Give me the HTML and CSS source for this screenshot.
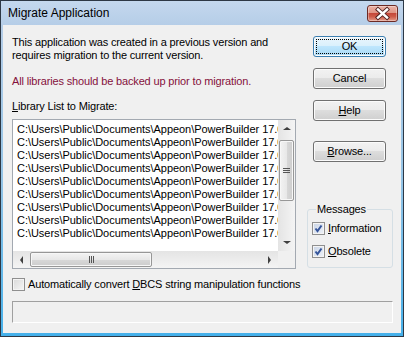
FILE: index.html
```html
<!DOCTYPE html>
<html lang="en">
<head>
    <meta charset="UTF-8">
    <title>Migrate Application</title>
    <link rel="stylesheet" href="styles.css">
</head>
<body>

    <div class="window">
        <div class="titlebar">
            <span class="title">Migrate Application</span>
            <span class="close">
                <svg width="31" height="17" viewBox="0 0 31 17">
                    <path d="M11 4.5 L20 12.5 M20 4.5 L11 12.5" stroke="#4a1f1f" stroke-width="4.2" stroke-linecap="square"/>
                    <path d="M11 4.5 L20 12.5 M20 4.5 L11 12.5" stroke="#ffffff" stroke-width="2.4" stroke-linecap="square"/>
                </svg>
            </span>
        </div>

        <div class="client">
            <div class="top">
                <div class="left">
                    <p class="intro">This application was created in a previous version and<br>requires migration to the current version.</p>
                    <p class="warn">All libraries should be backed up prior to migration.</p>
                    <div class="label"><u>L</u>ibrary List to Migrate:</div>

                    <div class="listbox">
                        <div class="items">
                            <div>C:\Users\Public\Documents\Appeon\PowerBuilder 17.0\Code Examples\Example App\pbexamfe.pbl</div>
                            <div>C:\Users\Public\Documents\Appeon\PowerBuilder 17.0\Code Examples\Example App\pbexamw1.pbl</div>
                            <div>C:\Users\Public\Documents\Appeon\PowerBuilder 17.0\Code Examples\Example App\pbexamw2.pbl</div>
                            <div>C:\Users\Public\Documents\Appeon\PowerBuilder 17.0\Code Examples\Example App\pbexamw3.pbl</div>
                            <div>C:\Users\Public\Documents\Appeon\PowerBuilder 17.0\Code Examples\Example App\pbexamw4.pbl</div>
                            <div>C:\Users\Public\Documents\Appeon\PowerBuilder 17.0\Code Examples\Example App\pbexamuo.pbl</div>
                            <div>C:\Users\Public\Documents\Appeon\PowerBuilder 17.0\Code Examples\Example App\pbexamd1.pbl</div>
                            <div>C:\Users\Public\Documents\Appeon\PowerBuilder 17.0\Code Examples\Example App\pbexamd2.pbl</div>
                            <div>C:\Users\Public\Documents\Appeon\PowerBuilder 17.0\Code Examples\Example App\pbexamm.pbl</div>
                        </div>
                        <div class="vscroll">
                            <div class="arrow"><span class="tri-up"></span></div>
                            <div class="track">
                                <div class="thumb"><span class="grip"></span></div>
                            </div>
                            <div class="arrow"><span class="tri-down"></span></div>
                        </div>
                        <div class="hscroll">
                            <div class="arrow"><span class="tri-left"></span></div>
                            <div class="track">
                                <div class="thumb"><span class="grip"></span></div>
                            </div>
                            <div class="arrow"><span class="tri-right"></span></div>
                        </div>
                        <div class="corner"></div>
                    </div>
                </div>

                <div class="right">
                    <div class="button default"><span class="focus">OK</span></div>
                    <div class="button">Cancel</div>
                    <div class="button"><u>H</u>elp</div>
                    <div class="button browse"><u>B</u>rowse...</div>

                    <fieldset class="group">
                        <legend>Messages</legend>
                        <div class="check-row">
                            <span class="checkbox checked">
                                <svg width="9" height="9" viewBox="0 0 9 9"><path d="M1.5 4.5 L3.5 7 L7.5 1.5" fill="none" stroke="#34549a" stroke-width="2"/></svg>
                            </span>
                            <span><u>I</u>nformation</span>
                        </div>
                        <div class="check-row">
                            <span class="checkbox checked">
                                <svg width="9" height="9" viewBox="0 0 9 9"><path d="M1.5 4.5 L3.5 7 L7.5 1.5" fill="none" stroke="#34549a" stroke-width="2"/></svg>
                            </span>
                            <span><u>O</u>bsolete</span>
                        </div>
                    </fieldset>
                </div>
            </div>

            <div class="check-row convert">
                <span class="checkbox"></span>
                <span>Automatically convert <u>D</u>BCS string manipulation functions</span>
            </div>

            <div class="status"></div>
        </div>
    </div>

</body>
</html>
```

FILE: styles.css
```css
* {
    box-sizing: border-box;
}
body {
    margin: 0;
    padding: 0;
    font-family: 'Liberation Sans', Arial, sans-serif;
    font-size: 11px;
    letter-spacing: -0.15px;
    color: #000;
    background: #ffffff;
}
u {
    text-decoration: underline;
}
.window {
    width: 404px;
    height: 337px;
    border: 1px solid #2d3845;
    background: linear-gradient(to bottom, #c4d8ee 0, #b5cde7 25px, #94c4e6 180px, #45b0ea 100%);
    display: flex;
    flex-direction: column;
}
.titlebar {
    height: 24px;
    display: flex;
    align-items: flex-start;
    justify-content: space-between;
    padding-left: 7px;
}
.title {
    font-size: 12px;
    letter-spacing: 0;
    line-height: 13px;
    margin-top: 6px;
    color: #000;
}
.close {
    width: 31px;
    height: 17px;
    margin-top: 4px;
    margin-right: 5px;
    border: 1px solid #6c2a24;
    border-radius: 3px;
    background: linear-gradient(to bottom, #eab2a6 0%, #df9585 45%, #c5483a 50%, #cd5a48 70%, #e39a88 100%);
    box-shadow: inset 0 0 0 1px rgba(255, 255, 255, 0.35);
    display: flex;
}
.close svg {
    margin: -1px;
}
.client {
    flex: 1;
    margin: 0 2px 3px 2px;
    background-color: #f0f0f0;
    padding: 11px 0 0 9px;
    display: flex;
    flex-direction: column;
}
.top {
    display: flex;
}
.left {
    width: 284px;
}
p {
    margin: 0;
    line-height: 13px;
}
.warn {
    margin-top: 13px;
    color: #85103c;
}
.label {
    margin-top: 12px;
    line-height: 13px;
}
.listbox {
    margin-top: 6px;
    height: 150px;
    border: 1px solid #a3a9b1;
    background: #ffffff;
    display: grid;
    grid-template-columns: 1fr 17px;
    grid-template-rows: 1fr 17px;
}
.items {
    overflow: hidden;
    padding: 3px 0 0 4px;
    white-space: nowrap;
    line-height: 13px;
    letter-spacing: -0.04px;
}
.vscroll, .hscroll {
    display: flex;
    background: #eaeaea;
}
.vscroll {
    flex-direction: column;
    background: linear-gradient(to right, #e4e4e4, #f4f4f4);
}
.hscroll {
    background: linear-gradient(to bottom, #e4e4e4, #f4f4f4);
}
.arrow {
    width: 17px;
    height: 17px;
    display: flex;
    align-items: center;
    justify-content: center;
    flex: none;
}
.track {
    flex: 1;
    display: flex;
}
.vscroll .track {
    flex-direction: column;
    padding-top: 3px;
}
.vscroll .thumb {
    height: 61px;
    margin: 0 1px;
}
.hscroll .thumb {
    width: 122px;
    margin: 1px 0;
}
.thumb {
    border: 1px solid #979797;
    border-radius: 2px;
    background: linear-gradient(to right, #f3f3f3, #e8e8e8 50%, #d8d8d8 51%, #cdcdcd);
    box-shadow: inset 0 0 0 1px #f7f7f7;
    display: flex;
    align-items: center;
    justify-content: center;
}
.hscroll .thumb {
    background: linear-gradient(to bottom, #f3f3f3, #e8e8e8 50%, #d8d8d8 51%, #cdcdcd);
}
.vscroll .grip {
    width: 7px;
    height: 5px;
    border-top: 1px solid #555;
    border-bottom: 1px solid #555;
    background: linear-gradient(to bottom, transparent 1px, #555 1px, #555 2px, transparent 2px);
}
.hscroll .grip {
    width: 5px;
    height: 7px;
    border-left: 1px solid #555;
    border-right: 1px solid #555;
    background: linear-gradient(to right, transparent 1px, #555 1px, #555 2px, transparent 2px);
}
.tri-up, .tri-down, .tri-left, .tri-right {
    width: 0;
    height: 0;
    border: 4px solid transparent;
}
.tri-up {
    border-bottom: 3px solid #3f3f3f;
    border-top-width: 0;
}
.tri-down {
    border-top: 3px solid #3f3f3f;
    border-bottom-width: 0;
}
.tri-left {
    border-right: 3px solid #3f3f3f;
    border-left-width: 0;
}
.tri-right {
    border-left: 3px solid #3f3f3f;
    border-right-width: 0;
}
.corner {
    background: #f0f0f0;
}
.right {
    width: 86px;
    margin-left: 11px;
    display: flex;
    flex-direction: column;
}
.button {
    width: 73px;
    height: 21px;
    margin-left: 6px;
    margin-bottom: 11px;
    border: 1px solid #707070;
    border-radius: 3px;
    background: linear-gradient(to bottom, #f2f2f2 0%, #ebebeb 49%, #dddddd 50%, #cfcfcf 100%);
    box-shadow: inset 0 0 0 1px #fbfbfb;
    display: flex;
    align-items: center;
    justify-content: center;
    line-height: 13px;
}
.button.default {
    border-color: #3c7fb1;
    background: linear-gradient(to bottom, #eaf6fd 0%, #d9f0fc 49%, #bee6fd 50%, #a7d9f5 100%);
    padding: 2px;
}
.focus {
    width: 100%;
    height: 100%;
    border: 1px dotted #000;
    display: flex;
    align-items: center;
    justify-content: center;
}
.button.browse {
    margin-top: 9px;
}
.group {
    margin: 30px 0 0 0;
    padding: 6px 4px 9px 4px;
    border: 1px solid #d5dfe5;
    border-radius: 3px;
    min-width: 0;
}
.group legend {
    padding: 0 1px;
    margin-left: 4px;
    line-height: 13px;
}
.check-row {
    display: flex;
    align-items: center;
    line-height: 13px;
}
.group .check-row + .check-row {
    margin-top: 10px;
}
.checkbox {
    width: 13px;
    height: 13px;
    margin-right: 3px;
    border: 1px solid #8f8f8f;
    background: linear-gradient(135deg, #d9d9d9, #f6f6f6);
    box-shadow: inset 0 0 0 1px #f4f4f4;
    display: flex;
    align-items: center;
    justify-content: center;
    flex: none;
}
.checkbox.checked {
    background: linear-gradient(135deg, #c9d4e6, #eef2f8);
}
.convert {
    margin-top: 9px;
}
.status {
    margin-top: 10px;
    width: 381px;
    height: 22px;
    border-top: 1px solid #a0a0a0;
    border-left: 1px solid #a0a0a0;
    border-bottom: 1px solid #ffffff;
    border-right: 1px solid #ffffff;
}
```
